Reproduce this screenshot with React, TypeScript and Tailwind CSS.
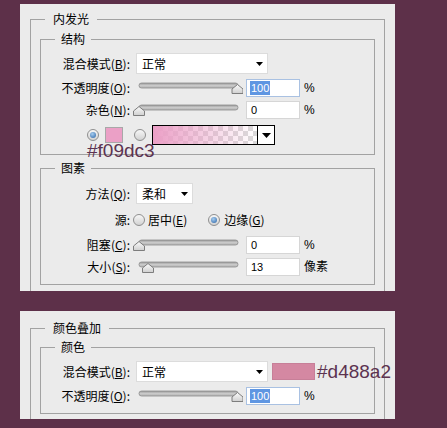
import React from 'react';

// small black down arrow used in the drop-downs
const Arrow = ({ big }: { big?: boolean }) =>
  big ? (
    <svg width="9" height="5" viewBox="0 0 9 5">
      <polygon points="0,0 9,0 4.5,5" fill="#000" />
    </svg>
  ) : (
    <svg width="7" height="4" viewBox="0 0 7 4">
      <polygon points="0,0 7,0 3.5,4" fill="#000" />
    </svg>
  );

const Group = ({
  title,
  legend,
  className,
  children,
}: {
  title: string;
  legend: string;
  className: string;
  children: React.ReactNode;
}) => (
  <fieldset className={`min-w-0 border border-[#a2a2a2] ${className}`}>
    <legend className={`leading-[16px] ${legend}`}>{title}</legend>
    {children}
  </fieldset>
);

const Label = ({ text, k }: { text: string; k?: string }) => (
  <span className="w-[89px] shrink-0 text-right whitespace-nowrap">
    {text}
    {k && (
      <>
        (<span className="underline underline-offset-1">{k}</span>)
      </>
    )}
    :
  </span>
);

const Select = ({ value, w }: { value: string; w: string }) => (
  <div className={`ml-[6px] h-[21px] ${w} shrink-0 flex items-center justify-between bg-white border border-[#dcdcdc] pl-[5px] pr-[4px]`}>
    <span>{value}</span>
    <Arrow />
  </div>
);

// track runs from x=6 to x=105, thumb centred on pos
const Slider = ({ pos }: { pos: number }) => (
  <svg width="110" height="18" viewBox="0 0 110 18" className="ml-[3px] shrink-0">
    <defs>
      <linearGradient id="trk" x1="0" y1="0" x2="0" y2="1">
        <stop offset="0%" stopColor="#9a9a9a" />
        <stop offset="50%" stopColor="#c9c9c9" />
        <stop offset="100%" stopColor="#b4b4b4" />
      </linearGradient>
      <linearGradient id="thb" x1="0" y1="0" x2="0" y2="1">
        <stop offset="0%" stopColor="#fbfbfb" />
        <stop offset="100%" stopColor="#cfcfcf" />
      </linearGradient>
    </defs>
    <rect x="6" y="4" width="99" height="5" rx="2.5" fill="url(#trk)" stroke="#8c8c8c" strokeWidth="0.8" />
    <polygon
      points={`${pos},5.5 ${pos + 5.5},10 ${pos + 5.5},14.5 ${pos - 5.5},14.5 ${pos - 5.5},10`}
      fill="url(#thb)"
      stroke="#7d7d7d"
      strokeWidth="1"
      strokeLinejoin="round"
    />
  </svg>
);

const Field = ({ value, selected }: { value: string; selected?: boolean }) => (
  <div
    className={`ml-[3px] w-[54px] h-[18px] shrink-0 flex items-center bg-white border pl-[3px] font-['Liberation_Sans',sans-serif] text-[11px] ${
      selected ? 'border-[#a9c1e2]' : 'border-[#d6d6d6]'
    }`}
  >
    {selected ? (
      <span className="bg-[#5f96e2] text-white leading-[14px] px-[1px]">{value}</span>
    ) : (
      <span className="pl-[1px]">{value}</span>
    )}
  </div>
);

const Unit = ({ text }: { text: string }) => <span className="ml-[4px] font-['Liberation_Sans','Noto_Sans_CJK_SC',sans-serif] text-[12px]">{text}</span>;

const Radio = ({ checked, className }: { checked?: boolean; className?: string }) => (
  <div
    className={`w-[12px] h-[12px] shrink-0 rounded-full border border-[#8f8f8f] bg-gradient-to-b from-[#f7f7f7] to-[#d2d2d2] flex items-center justify-center ${className ?? ''}`}
  >
    {checked && <div className="w-[6px] h-[6px] rounded-full bg-[radial-gradient(circle_at_40%_35%,#a6cdf0,#2a63a6)]" />}
  </div>
);

const Row = ({ className, children }: { className: string; children: React.ReactNode }) => (
  <div className={`flex items-center ${className}`}>{children}</div>
);

export default function App() {
  return (
    <div className="w-[447px] h-[428px] overflow-hidden bg-[#5d3049] pl-[20px] pt-[4px] text-[12px] text-black font-['Noto_Sans_CJK_SC',sans-serif]">
      {/* inner glow */}
      <div className="w-[375px] h-[287px] overflow-hidden bg-[#ebebeb] px-[10px] pt-[7px]">
        <Group title="内发光" legend="ml-[14px] px-[8px]" className="pb-[40px]">
          <Group title="结构" legend="ml-[14px] px-[6px]" className="mx-[9px] mt-[4px] pt-[6px] pb-[9px]">
            <Row className="h-[21px]">
              <Label text="混合模式" k="B" />
              <Select value="正常" w="w-[132px]" />
            </Row>
            <Row className="h-[18px] mt-[5px]">
              <Label text="不透明度" k="O" />
              <Slider pos={104.5} />
              <Field value="100" selected />
              <Unit text="%" />
            </Row>
            <Row className="h-[18px] mt-[4px]">
              <Label text="杂色" k="N" />
              <Slider pos={6} />
              <Field value="0" />
              <Unit text="%" />
            </Row>
            <div className="relative flex items-center h-[20px] mt-[6px] pl-[46px]">
              <Radio checked />
              <div className="ml-[6px] w-[18px] h-[16px] shrink-0 border border-[#a8a8a8] bg-[#eba0c6]" />
              <Radio className="ml-[11px]" />
              <div className="ml-[6px] w-[123px] h-[20px] shrink-0 flex border border-black">
                <div className="flex-1 bg-[conic-gradient(#dadada_25%,#fff_0_50%,#dadada_0_75%,#fff_0)] bg-[length:10px_10px]">
                  <div className="h-full bg-[linear-gradient(to_right,#eb9fc6,rgba(235,159,198,0))]" />
                </div>
                <div className="w-[17px] border-l border-black bg-white flex items-center justify-center">
                  <Arrow big />
                </div>
              </div>
              <span className="absolute left-[46px] top-[16px] text-[19px] leading-[19px] text-[#5c3350] font-['Liberation_Sans',sans-serif]">
                #f09dc3
              </span>
            </div>
          </Group>

          <Group title="图素" legend="ml-[14px] px-[6px]" className="mx-[9px] mt-[5px] pt-[7px] pb-[8px]">
            <Row className="h-[21px]">
              <Label text="方法" k="Q" />
              <Select value="柔和" w="w-[57px]" />
            </Row>
            <Row className="h-[22px] mt-[5px]">
              <Label text="源" />
              <Radio className="ml-[3px]" />
              <span className="ml-[3px]">
                居中(<span className="underline underline-offset-1">E</span>)
              </span>
              <Radio checked className="ml-[21px]" />
              <span className="ml-[4px]">
                边缘(<span className="underline underline-offset-1">G</span>)
              </span>
            </Row>
            <Row className="h-[18px] mt-[5px]">
              <Label text="阻塞" k="C" />
              <Slider pos={6} />
              <Field value="0" />
              <Unit text="%" />
            </Row>
            <Row className="h-[18px] mt-[4px]">
              <Label text="大小" k="S" />
              <Slider pos={15} />
              <Field value="13" />
              <Unit text="像素" />
            </Row>
          </Group>
        </Group>
      </div>

      {/* colour overlay */}
      <div className="mt-[20px] w-[375px] h-[108px] overflow-hidden bg-[#ebebeb] px-[10px] pt-[9px]">
        <Group title="颜色叠加" legend="ml-[14px] px-[8px]" className="pb-[30px]">
          <Group title="颜色" legend="ml-[14px] px-[6px]" className="mx-[9px] mt-[3px] pt-[6px] pb-[8px]">
            <Row className="h-[21px]">
              <Label text="混合模式" k="B" />
              <Select value="正常" w="w-[132px]" />
              <div className="ml-[4px] w-[43px] h-[17px] shrink-0 bg-[#d488a2] border border-[#c77f98]" />
              <span className="ml-[2px] shrink-0 whitespace-nowrap text-[19px] leading-[19px] text-[#5c3350] font-['Liberation_Sans',sans-serif]">
                #d488a2
              </span>
            </Row>
            <Row className="h-[18px] mt-[5px]">
              <Label text="不透明度" k="O" />
              <Slider pos={104.5} />
              <Field value="100" selected />
              <Unit text="%" />
            </Row>
          </Group>
        </Group>
      </div>
    </div>
  );
}
